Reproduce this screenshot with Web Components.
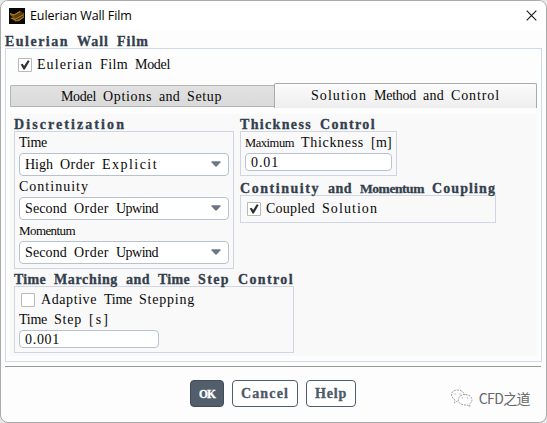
<!DOCTYPE html>
<html lang="en">
<head>
<meta charset="utf-8">
<title>Eulerian Wall Film</title>
<style>
html, body { margin: 0; height: 100%; background: #e9e7e7; overflow: hidden; }
body { font-family: "Liberation Serif", serif; color: #080808; }
.body { padding: 0 5px 0 4px; }
.panel { display: grid; grid-template-columns: 220px 256px; column-gap: 6px; margin: 6px 0 0; padding: 0 0 4px 4px; height: 238px; background: #f9f9f9; align-content: start; }
.right { display: flex; flex-direction: column; align-items: flex-start; }
.wide { grid-column: 1 / 3; justify-self: start; }
.footer { display: flex; justify-content: center; gap: 8px; margin: 4px 5px 0 4px; padding-top: 13px; border-top: 1px solid #999; }
</style>
</head>
<body>
<dialog-window caption="Eulerian Wall Film">
  <div class="body">
    <group-box caption="Eulerian Wall Film" style="--width: 537px; --height: 314px; --legend: 18px; --pad: 0 4px; --line: #d0d9e8">
      <check-box checked style="--row: 31px; --left: 8px; --gap: 5px">Eulerian Film Model</check-box>
      <tab-bar></tab-bar>
      <div class="panel">
        <group-box caption="Discretization" style="--width: 220px; --height: 138px">
          <field-label>Time</field-label>
          <drop-down>High Order Explicit</drop-down>
          <field-label>Continuity</field-label>
          <drop-down>Second Order Upwind</drop-down>
          <field-label>Momentum</field-label>
          <drop-down>Second Order Upwind</drop-down>
        </group-box>
        <div class="right">
          <group-box caption="Thickness Control" style="--width: 157px; --height: 45px">
            <field-label>Maximum Thickness [m]</field-label>
            <text-field style="--width: 147px">0.01</text-field>
          </group-box>
          <group-box caption="Continuity and Momentum Coupling" style="--width: 256px; --height: 28px; --legend: 19px">
            <check-box checked style="--row: 26px; --left: 2px; --gap: 5px">Coupled Solution</check-box>
          </group-box>
        </div>
        <group-box class="wide" caption="Time Marching and Time Step Control" style="--width: 280px; --height: 67px">
          <check-box style="--row: 18px; --top: 4px; --left: 2px; --gap: 6px">Adaptive Time Stepping</check-box>
          <field-label>Time Step [s]</field-label>
          <text-field style="--width: 140px">0.001</text-field>
        </group-box>
      </div>
    </group-box>
  </div>
  <div class="footer">
    <push-button primary style="--width: 34px">OK</push-button>
    <push-button style="--width: 66px">Cancel</push-button>
    <push-button style="--width: 50px">Help</push-button>
  </div>
  <water-mark slot="mark"></water-mark>
</dialog-window>

<script>
const pen = document.createElement("canvas").getContext("2d");

// Text on a fixed character cell: every word takes cell * length pixels.
class CellText extends HTMLElement {
  constructor() {
    super();
    this.attachShadow({ mode: "open" });
  }

  connectedCallback() {
    const bold = this.hasAttribute("bold");
    const cell = bold ? 8 : 7;
    this.shadowRoot.innerHTML = `<style>
      :host { display: block; white-space: pre; font: ${bold ? "bold" : ""} 14px/16px "Liberation Serif", serif; -webkit-text-stroke: ${bold ? "0.3px" : "0"}; }
    </style>`;
    this.getAttribute("text").split(/( )/).forEach(word => {
      const span = document.createElement("span");
      span.textContent = word;
      let size = 14;
      let gap;
      // wide words are set smaller so their letters do not collide
      do {
        pen.font = `${bold ? "bold " : ""}${size}px "Liberation Serif"`;
        gap = cell - pen.measureText(word).width / word.length;
        size -= 0.5;
      } while (gap < -0.7 && size > 11);
      span.style.fontSize = (size + 0.5) + "px";
      span.style.letterSpacing = gap + "px";
      this.shadowRoot.appendChild(span);
    });
  }
}
customElements.define("cell-text", CellText);

class DialogWindow extends HTMLElement {
  constructor() {
    super();
    this.attachShadow({ mode: "open" });
  }

  connectedCallback() {
    this.shadowRoot.innerHTML = `
<style>
:host { display: block; box-sizing: border-box; width: 547px; height: 423px; border: 1px solid #aaa; border-radius: 8px; background: #fdfdfd; overflow: hidden; position: relative; }
header { display: flex; align-items: center; height: 29px; padding: 0 9px 0 8px; background: #fff; }
h1 { flex: 1; margin: 0 0 0 5px; font: 12.5px/18px "Open Sans", sans-serif; letter-spacing: -0.08px; color: #000; }
</style>
<header>
  <svg width="16" height="16" viewBox="0 0 16 16">
    <path fill="#080602" d="M0 0h16v16H0z"/>
    <path fill="#7a5312" d="M1 5l4 1.500L10.500 3l2.500 1v1l2-.5V9l-5 4H6l-5-3 3-.5L1 7z"/>
    <path fill="none" stroke="#c08a2a" stroke-width=".8" d="M1 5.500l4 1.500 6-3.500M2 10l4 1.500 8-4.500M6 13l4-.5 5-3.500"/>
    <path fill="none" stroke="#2c1d06" stroke-width=".7" d="M5 8.500l8-4M6 10l8-4.500M7 12l7-4"/>
  </svg>
  <h1>${this.getAttribute("caption")}</h1>
  <svg width="11" height="11" viewBox="0 0 11 11"><path d="M.7.7l9.6 9.6M10.3.7L.7 10.3" stroke="#1c1c1c" stroke-width="1.2"/></svg>
</header>
<slot></slot>
<slot name="mark"></slot>`;
  }
}
customElements.define("dialog-window", DialogWindow);

class GroupBox extends HTMLElement {
  constructor() {
    super();
    this.attachShadow({ mode: "open" });
  }

  connectedCallback() {
    this.shadowRoot.innerHTML = `
<style>
:host { display: block; width: var(--width); }
.legend { display: flex; align-items: flex-end; height: var(--legend, 17px); color: #343f4e; }
.legend cell-text { margin-bottom: -2px; }
.box { box-sizing: border-box; height: var(--height); padding: var(--pad, 0 4px); border: 1px solid var(--line, #d0d5e3); }
/* nested groups fall back to the defaults */
::slotted(*) { --legend: initial; --pad: initial; --line: initial; }
</style>
<div class="legend"><cell-text bold text="${this.getAttribute("caption")}"></cell-text></div>
<div class="box"><slot></slot></div>`;
  }
}
customElements.define("group-box", GroupBox);

class CheckBox extends HTMLElement {
  constructor() {
    super();
    this.attachShadow({ mode: "open" });
  }

  connectedCallback() {
    const tick = this.hasAttribute("checked")
      ? '<path d="M2.700 6.500l2-.7 1.400 2.200L9.800 2.200l1.900.8L6.800 11.500H5.500z" fill="#303030"/>' : "";
    this.shadowRoot.innerHTML = `
<style>
:host { display: flex; align-items: center; height: var(--row); margin-top: var(--top, 0); padding-left: var(--left); gap: var(--gap); }
</style>
<svg width="14" height="14" viewBox="0 0 14 14"><path d="M.5.5h13v13H.5z" fill="#fff" stroke="#b9b9b9"/>${tick}</svg>
<cell-text text="${this.textContent}"></cell-text>`;
  }
}
customElements.define("check-box", CheckBox);

class TabBar extends HTMLElement {
  constructor() {
    super();
    this.attachShadow({ mode: "open" });
    this.shadowRoot.innerHTML = `
<style>
:host { display: flex; align-items: flex-start; height: 25px; padding-top: 3px; }
div { box-sizing: border-box; display: flex; justify-content: center; align-items: center; }
.off { width: 264px; height: 22px; margin-top: 2px; padding: 1px 2px 0 0; border: 1px solid #b5b5b5; border-right: 0; border-radius: 2px 0 0 0; background: linear-gradient(#e1e1e1, #dadada); }
.on { width: 263px; height: 25px; padding-bottom: 1px; border: 1px solid #aaa; border-bottom: 0; border-radius: 2px 2px 0 0; background: linear-gradient(#fbfbfb, #eee); }
</style>
<div class="off"><cell-text text="Model Options and Setup"></cell-text></div>
<div class="on"><cell-text text="Solution Method and Control"></cell-text></div>`;
  }
}
customElements.define("tab-bar", TabBar);

class FieldLabel extends HTMLElement {
  constructor() {
    super();
    this.attachShadow({ mode: "open" });
  }

  connectedCallback() {
    this.shadowRoot.innerHTML = `
<style>:host { display: flex; align-items: center; height: 21px; }</style>
<cell-text text="${this.textContent}"></cell-text>`;
  }
}
customElements.define("field-label", FieldLabel);

class DropDown extends HTMLElement {
  constructor() {
    super();
    this.attachShadow({ mode: "open" });
  }

  connectedCallback() {
    this.shadowRoot.innerHTML = `
<style>
:host { box-sizing: border-box; display: flex; justify-content: space-between; align-items: center; height: 23px; padding: 0 7px 0 5px; border: 1px solid #b7c2d0; border-radius: 4px; background: #fff; }
svg { margin-bottom: 2px; }
</style>
<cell-text text="${this.textContent}"></cell-text>
<svg width="10" height="6" viewBox="0 0 10 6"><path d="M.5.3h9v1L5.7 5.5H4.3L.5 1.3z" fill="#6c7583"/></svg>`;
  }
}
customElements.define("drop-down", DropDown);

class TextField extends HTMLElement {
  constructor() {
    super();
    this.attachShadow({ mode: "open" });
  }

  connectedCallback() {
    this.shadowRoot.innerHTML = `
<style>
:host { box-sizing: border-box; display: flex; align-items: center; width: var(--width); height: 18px; padding: 1px 5px 0; border: 1px solid #b7c2d6; border-radius: 4px; background: #fff; }
</style>
<cell-text text="${this.textContent}"></cell-text>`;
  }
}
customElements.define("text-field", TextField);

class PushButton extends HTMLElement {
  constructor() {
    super();
    this.attachShadow({ mode: "open" });
  }

  connectedCallback() {
    this.shadowRoot.innerHTML = `
<style>
:host { box-sizing: border-box; display: flex; justify-content: center; align-items: center; width: var(--width); height: 27px; padding-top: 1px; border: 1px solid #505d6c; border-radius: 4px; background: #fff; color: #4c5968; }
:host([primary]) { border-color: #404b59; background: #525e6c; color: #fff; }
</style>
<cell-text bold text="${this.textContent}"></cell-text>`;
  }
}
customElements.define("push-button", PushButton);

class WaterMark extends HTMLElement {
  constructor() {
    super();
    this.attachShadow({ mode: "open" });
    this.shadowRoot.innerHTML = `
<style>
:host { position: absolute; right: 16px; bottom: 14px; display: flex; align-items: center; gap: 6px; font: 14px/20px "Noto Sans CJK SC", sans-serif; color: #666; }
span { letter-spacing: -0.6px; }
</style>
<svg width="23" height="18" viewBox="0 0 23 18" fill="none" stroke="#888" stroke-width=".8" stroke-dasharray="2 1">
  <path d="M7.5 12l-3 2 .5-3C-1 7 1 1 7.5 1c4 0 6 2 6.500 4"/>
  <path d="M15 5.500c-9 0-9 10.500 0 10.500l2 0 3 1.500-.5-2.500C24 12 22 5.500 15 5.500z"/>
  <path d="M5 4.500v1M10 4.500v1M12.500 8.500v1M17.500 8.500v1"/>
</svg>
<span>CFD之道</span>`;
  }
}
customElements.define("water-mark", WaterMark);
</script>
</body>
</html>
